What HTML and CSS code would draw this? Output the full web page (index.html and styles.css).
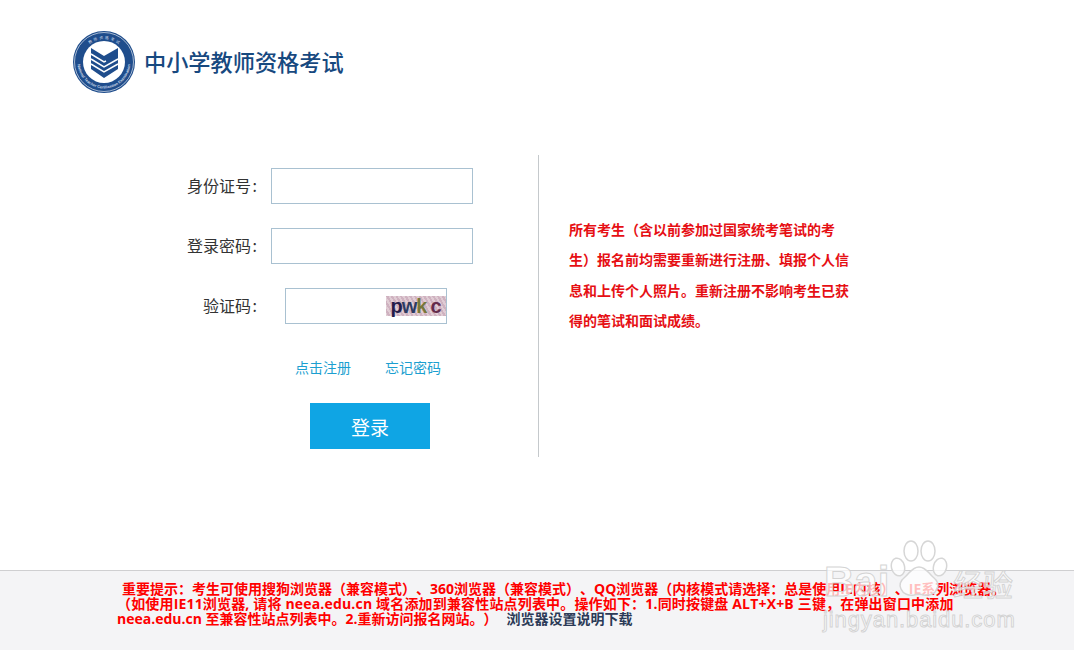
FILE: index.html
```html
<!DOCTYPE html>
<html lang="zh-CN">
<head>
    <meta charset="UTF-8">
    <title>中小学教师资格考试</title>
    <link rel="stylesheet" href="styles.css">
</head>
<body>
    <div class="header">
        <svg class="logo" viewBox="0 0 62 62" width="62" height="62">
            <defs>
                <path id="ring-top" d="M8 31a23 23 0 0 1 46 0"/>
                <path id="ring-bottom" d="M4.500 31a26.500 26.500 0 0 0 53 0"/>
            </defs>
            <circle cx="31" cy="31" r="31" fill="#1f4d8c"/>
            <circle cx="31" cy="31" r="29.500" fill="none" stroke="#fff" stroke-width="0.6"/>
            <circle cx="31" cy="31" r="21" fill="#fff"/>
            <text class="ring-text"><textPath href="#ring-top" startOffset="50%" text-anchor="middle">教  师  资  格  考  试</textPath></text>
            <text class="ring-text ring-en"><textPath href="#ring-bottom" startOffset="50%" text-anchor="middle">National Teacher Certification Examination</textPath></text>
            <polygon points="18,17 31,25 45,17 45,38 31,47 18,38" fill="#1f4d8c"/>
            <g fill="none" stroke="#fff" stroke-width="1.500">
                <polyline points="18,23 31,31 33,30"/>
                <polyline points="18,28 31,36 45,28"/>
                <polyline points="18,33 31,41 45,33"/>
            </g>
        </svg>
        <div class="site-title">中小学教师资格考试</div>
    </div>

    <div class="main">
        <form class="login">
            <div class="row">
                <label for="id-no">身份证号 :</label>
                <input type="text" id="id-no" class="field">
            </div>
            <div class="row">
                <label for="pwd">登录密码 :</label>
                <input type="password" id="pwd" class="field">
            </div>
            <div class="row">
                <label class="label-code" for="code">验证码 :</label>
                <div class="code-box">
                    <input type="text" id="code" class="code-input">
                    <div class="code-img"><span class="c1">p</span><span class="c2">w</span><span class="c3">k</span><span class="c4">c</span></div>
                </div>
            </div>
            <div class="links">
                <a href="#">点击注册</a>
                <a href="#">忘记密码</a>
            </div>
            <button type="button" class="btn-login">登录</button>
        </form>
        <div class="notice">所有考生（含以前参加过国家统考笔试的考生）报名前均需要重新进行注册、填报个人信息和上传个人照片。重新注册不影响考生已获得的笔试和面试成绩。</div>
    </div>

    <div class="footer">
        <p class="tips">重要提示：考生可使用搜狗浏览器（兼容模式）、360浏览器（兼容模式）、QQ浏览器（内核模式请选择：总是使用IE内核）、IE系列浏览器。<br><span class="tips-wide">（如使用IE11浏览器, 请将 neea.edu.cn 域名添加到兼容性站点列表中。操作如下：1.同时按键盘 ALT+X+B 三键，在弹出窗口中添加</span><br>neea.edu.cn 至兼容性站点列表中。2.重新访问报名网站。）<a href="#" class="guide">浏览器设置说明下载</a></p>
    </div>

    <!-- watermark over the footer -->
    <div class="watermark">
        <span class="wm-bai">Bai</span>
        <svg class="wm-paw" viewBox="0 0 58 58" width="58" height="58">
            <g fill="#fff" fill-opacity="0.75" stroke="#d6d6d6" stroke-width="1.500">
                <ellipse cx="8" cy="27" rx="6.500" ry="9" transform="rotate(-15 8 27)"/>
                <ellipse cx="21" cy="11" rx="7" ry="10"/>
                <ellipse cx="38" cy="11" rx="7" ry="10"/>
                <ellipse cx="50" cy="27" rx="6.500" ry="9" transform="rotate(15 50 27)"/>
                <path d="M29 27c-7 0-9 6-14 10-5 4-6 8-4 12 2 5 8 7 13 6 3-1 7-1 10 0 5 1 11-1 13-6 2-4 1-8-4-12-5-4-7-10-14-10z"/>
            </g>
        </svg>
        <span class="wm-jy">经验</span>
        <span class="wm-url">jingyan.baidu.com</span>
    </div>
</body>
</html>
```

FILE: styles.css
```css
* {
    box-sizing: border-box;
}

html, body {
    margin: 0;
    height: 655px;
    overflow: hidden;
}

body {
    position: relative;
    background: #fff;
    font-family: "Noto Sans CJK SC", sans-serif;
    color: #333;
    text-spacing-trim: space-all;
}

.header {
    display: flex;
    align-items: center;
    gap: 9px;
    padding: 31px 0 0 73px;
}

.logo {
    display: block;
}

.ring-text {
    font-size: 3.800px;
    fill: #cfdbea;
    white-space: pre;
}

.ring-en {
    font-size: 3.800px;
    font-weight: bold;
    font-family: "Liberation Sans", sans-serif;
}

.site-title {
    margin-top: -2px;
    font-size: 22.200px;
    font-weight: 500;
    line-height: 30px;
    color: #17497f;
}

.main {
    display: flex;
    margin-top: 62px;
}

.login {
    width: 539px;
    height: 302px;
    padding-top: 13px;
    border-right: 1px solid #c5c9cc;
}

.row {
    display: flex;
    align-items: center;
    height: 36px;
    margin-bottom: 24px;
}

.row label {
    width: 257px;
    margin-top: -3px;
    margin-right: 14px;
    text-align: right;
    font-size: 16px;
    word-spacing: -2px;
}

.row .label-code {
    margin-right: 28px;
}

.field {
    width: 202px;
    height: 36px;
    border: 1px solid #a9c1d1;
    background: #fff;
}

.code-box {
    display: flex;
    align-items: center;
    width: 162px;
    height: 36px;
    border: 1px solid #a9c1d1;
}

.code-input {
    flex: 1;
    min-width: 0;
    height: 100%;
    border: none;
    outline: none;
}

.code-img {
    display: flex;
    justify-content: center;
    align-items: center;
    width: 60px;
    height: 20px;
    background: repeating-linear-gradient(60deg, #e0ccd4 0 2px, #cfb2c0 2px 4px);
    font-family: "Liberation Sans", sans-serif;
    font-size: 20px;
    font-weight: bold;
    line-height: 20px;
}

.c1 { color: #241c4a; }
.c2 { color: #2d3c63; margin-left: -1px; }
.c3 { color: #77773a; margin-left: -1px; }
.c4 { color: #642c4c; margin-left: 3px; }

/* collapses with the 24px under the last row */
.links {
    display: flex;
    gap: 34px;
    height: 20px;
    margin-top: 33px;
    padding-left: 295px;
    font-size: 14px;
    line-height: 20px;
}

.links a {
    color: #1c9fd0;
    text-decoration: none;
}

.btn-login {
    display: block;
    width: 120px;
    height: 46px;
    margin: 26px 0 0 310px;
    border: none;
    background: #0fa5e4;
    color: #fff;
    font-family: inherit;
    font-size: 19px;
}

.notice {
    width: 310px;
    padding: 59px 0 0 30px;
    font-size: 14px;
    font-weight: bold;
    line-height: 30.330px;
    color: #e60f14;
}

.footer {
    height: 80px;
    margin-top: 113px;
    padding: 10px 0 0 117px;
    border-top: 1px solid #cfcfd1;
    background: #f4f4f6;
}

.tips {
    margin: 0;
    font-family: "Open Sans", "Noto Sans CJK SC", sans-serif;
    font-size: 14px;
    font-weight: bold;
    line-height: 15px;
    text-indent: 5px;
    white-space: nowrap;
    color: #f00;
}

.tips-wide {
    letter-spacing: 0.17px;
}

.guide {
    margin-left: 9px;
    color: #2b3a57;
    text-decoration: none;
}

.watermark {
    position: absolute;
    left: 820px;
    top: 538px;
    width: 200px;
    height: 96px;
}

.wm-bai, .wm-jy, .wm-url {
    position: absolute;
    color: rgba(255, 255, 255, 0.72);
    -webkit-text-stroke: 1px rgba(205, 205, 205, 0.85);
}

.wm-bai {
    left: 4px;
    top: 22px;
    font-family: "Liberation Sans", sans-serif;
    font-size: 42px;
    font-weight: bold;
    line-height: 44px;
}

.wm-paw {
    position: absolute;
    left: 70px;
    top: 2px;
}

.wm-jy {
    left: 133px;
    top: 28px;
    font-size: 30px;
    line-height: 34px;
}

.wm-url {
    left: 3px;
    top: 70px;
    font-family: "Liberation Sans", sans-serif;
    font-size: 22px;
    line-height: 24px;
    letter-spacing: 0.9px;
}
```
